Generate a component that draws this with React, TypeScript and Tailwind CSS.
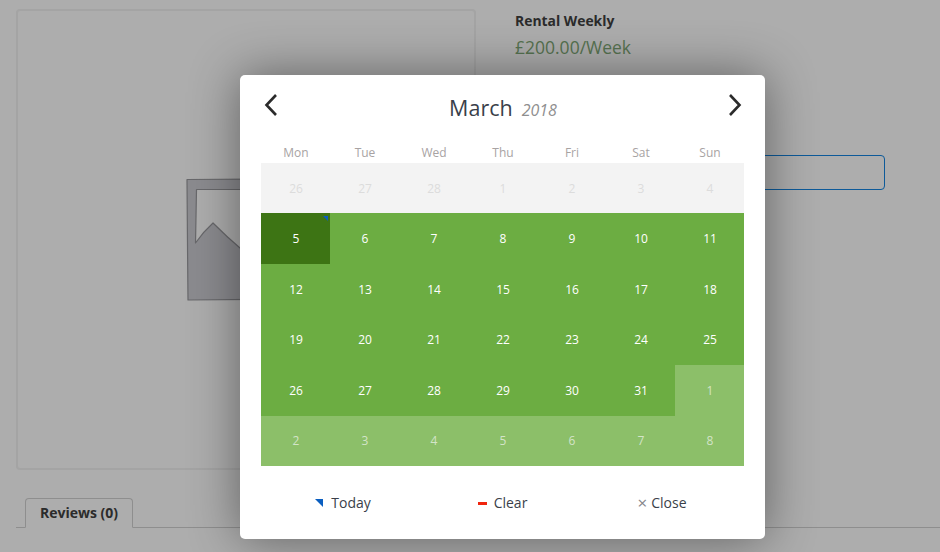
const font = { fontFamily: '"Open Sans", sans-serif' };

type Cell = { label: number; kind: "off" | "on" | "today" | "next" };

const days = ["Mon", "Tue", "Wed", "Thu", "Fri", "Sat", "Sun"];

const cells: Cell[] = [
  ...[26, 27, 28, 1, 2, 3, 4].map((label) => ({ label, kind: "off" as const })),
  { label: 5, kind: "today" },
  ...Array.from({ length: 26 }, (_, i) => ({ label: i + 6, kind: "on" as const })),
  ...[1, 2, 3, 4, 5, 6, 7, 8].map((label) => ({ label, kind: "next" as const })),
];

function cellClass(kind: Cell["kind"]) {
  if (kind === "off") return "bg-[#f3f3f3] text-[#dcdcdc] pt-px";
  if (kind === "today") return "bg-[#3d7414] text-white";
  if (kind === "next") return "bg-[#8cbf69] text-[#d3e4c8]";
  return "bg-[#6cad42] text-white";
}

function Placeholder() {
  return (
    <svg width="120" height="130" viewBox="0 0 120 130" className="block">
      <path
        d="M1 4.5 L112 4 L114 124 L2 125 L1.5 70 Z M10.5 14.5 L9.5 68 Q17 57 27 48 Q41 62 54 73 L78 92 L100 60 L100 14.5 Z"
        fill="#8b8b8f"
        fillRule="evenodd"
        stroke="#68686b"
        strokeWidth="1.2"
        strokeLinejoin="round"
      />
    </svg>
  );
}

export default function App() {
  return (
    <div className="relative h-[552px] w-[940px] overflow-hidden bg-[#adadad]" style={font}>
      <div className="flex pl-4 pt-[9px]">
        <div className="flex h-[461px] w-[460px] shrink-0 items-center justify-center rounded-sm border-2 border-[#a4a4a4]">
          <Placeholder />
        </div>
        <div className="ml-[39px] flex-1">
          <div className="mt-[2px] text-[13.9px] leading-[20px] font-bold text-[#2b2b2b]">Rental Weekly</div>
          <div className="mt-[4px] text-[17.5px] leading-[25px] text-[#567250]">£200.00/Week</div>
          <div className="mt-[95px] h-[35px] w-[370px] rounded-sm border border-[#0d5a99]" />
        </div>
      </div>

      <div className="mt-[28px] ml-4 flex h-[30px] items-stretch border-b border-[#8e8e8e] pl-[9px]">
        <div className="-mb-px rounded-t-[4px] border border-b-[#adadad] border-[#8e8e8e] px-[14px] text-sm leading-[28px] font-bold text-[#2b2b2b]">
          Reviews (0)
        </div>
      </div>

      <div className="absolute top-[75px] left-[240px] h-[464px] w-[525px] rounded-[5px] bg-white px-[21px] shadow-[0_0_50px_rgba(0,0,0,0.45)]">
        <div className="relative flex h-[68px] items-start justify-center pt-[18px]">
          <svg width="14" height="24" viewBox="0 0 14 24" className="absolute top-[18px] left-[3px]" fill="none" stroke="#2b2b2b" strokeWidth="2.6">
            <path d="M12 2 L2.5 12 L12 22" />
          </svg>
          <div className="flex items-baseline gap-[9px] pl-px">
            <span className="text-[21.5px] leading-[30px] text-[#3a3f4a]">March</span>
            <span className="text-base leading-[30px] text-[#8f8f8f] italic">2018</span>
          </div>
          <svg width="14" height="24" viewBox="0 0 14 24" className="absolute top-[18px] right-[2px]" fill="none" stroke="#2b2b2b" strokeWidth="2.6">
            <path d="M2 2 L11.5 12 L2 22" />
          </svg>
        </div>

        <div className="grid h-[20px] grid-cols-7 text-center text-xs leading-[20px] text-[#a8a3a3]">
          {days.map((d) => (
            <div key={d} className="pl-px">{d}</div>
          ))}
        </div>

        <div className="grid h-[303px] grid-cols-7 grid-rows-[50px_51px_51px_50px_51px_50px] text-xs">
          {cells.map((c, i) => (
            <div key={i} className={`relative flex items-center justify-center pl-px ${cellClass(c.kind)}`}>
              {c.label}
              {c.kind === "today" && (
                <span className="absolute top-[3px] right-[2px] h-0 w-0 border-t-[5px] border-l-[5px] border-t-[#0a5ec0] border-l-transparent" />
              )}
            </div>
          ))}
        </div>

        <div className="grid grid-cols-3 pt-[26px] text-sm leading-[22px] text-[#3a3f4a]">
          <div className="flex items-center justify-center gap-[8px] pl-[3px]">
            <span className="h-0 w-0 border-t-[8px] border-l-[8px] border-t-[#0a5ec0] border-l-transparent" />
            Today
          </div>
          <div className="flex items-center justify-center gap-[7px]">
            <span className="h-[3px] w-[9px] bg-[#f0250e]" />
            Clear
          </div>
          <div className="flex items-center justify-center gap-[4px] pr-[3px]">
            <span className="text-[17px] leading-[22px] text-[#85858a]">×</span>
            Close
          </div>
        </div>
      </div>
    </div>
  );
}
